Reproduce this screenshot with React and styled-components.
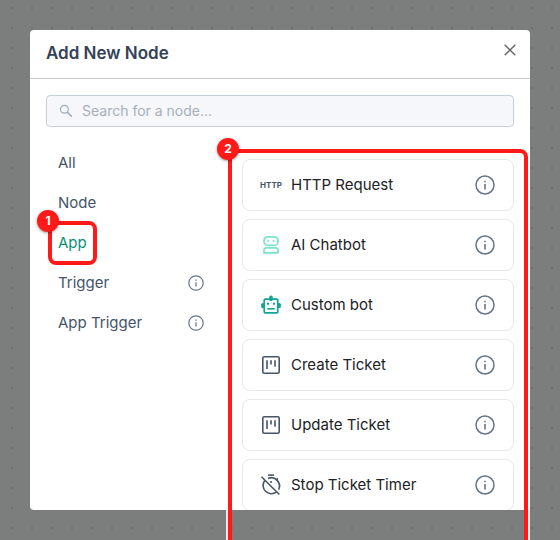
import React, { useState } from "react";
import styled, { createGlobalStyle } from "styled-components";

const GlobalStyle = createGlobalStyle`
  * { box-sizing: border-box; }
  body {
    margin: 0;
    font-family: Inter, "Open Sans", sans-serif;
    color: #44546a;
  }
  button, input { font: inherit; color: inherit; }
`;

const Backdrop = styled.div`
  height: 100vh;
  padding: 30px;
  overflow: hidden;
  background-color: #7b7e7c;
  background-image: radial-gradient(circle, #6e716f 1px, transparent 1px);
  background-size: 20px 20px;
  background-position: 2px 18px;
`;

const Dialog = styled.section`
  display: flex;
  flex-direction: column;
  height: 100%;
  background: #fff;
  border-radius: 4px;
`;

const Header = styled.header`
  display: flex;
  align-items: flex-start;
  justify-content: space-between;
  padding: 10px 10px 12px 16px;
  border-bottom: 1px solid #c7cacd;
`;

const Title = styled.h1`
  margin: 0;
  padding-top: 1px;
  font-size: 17px;
  line-height: 25px;
  font-weight: 600;
  color: #344256;
`;

const IconButton = styled.button`
  display: grid;
  place-items: center;
  width: 20px;
  height: 20px;
  padding: 0;
  border: 0;
  background: none;
  color: ${(p) => p.$color || "#64748b"};
  cursor: pointer;
`;

const Body = styled.div`
  flex: 1;
  min-height: 0;
  display: flex;
  flex-direction: column;
  gap: 16px;
  padding: 16px 16px 0;
`;

const SearchBox = styled.label`
  display: flex;
  align-items: center;
  gap: 9px;
  height: 32px;
  flex: none;
  padding: 0 12px;
  border: 1px solid #c8ced8;
  border-radius: 4px;
  background: #f5f7fb;
  color: #a2acbb;
`;

const SearchInput = styled.input`
  flex: 1;
  min-width: 0;
  padding: 0;
  border: 0;
  outline: 0;
  background: none;
  font-size: 14px;
  line-height: 20px;
  color: #344256;
  &::placeholder { color: #a8b0b9; opacity: 1; }
`;

const Columns = styled.div`
  flex: 1;
  min-height: 0;
  display: grid;
  grid-template-columns: 170px minmax(0, 1fr);
  grid-template-rows: minmax(0, 1fr);
  gap: 26px;
`;

const Categories = styled.nav`
  display: flex;
  flex-direction: column;
`;

const CategoryRow = styled.div`
  display: flex;
  align-items: center;
  justify-content: space-between;
  height: 40px;
  padding: 0 10px 0 12px;
`;

const CategoryButton = styled.button`
  position: relative;
  height: 40px;
  padding: 0;
  border: 0;
  background: none;
  font-size: 15px;
  line-height: 20px;
  color: ${(p) => (p.$active ? "#0a8f76" : "#44546a")};
  cursor: pointer;
`;

const Results = styled.div`
  position: relative;
  min-height: 0;
`;

const NodeList = styled.ul`
  display: flex;
  flex-direction: column;
  gap: 8px;
  height: 100%;
  margin: 0;
  padding: 16px 0 0;
  overflow: hidden;
  list-style: none;
`;

const NodeCard = styled.li`
  display: flex;
  align-items: center;
  flex: none;
  height: 52px;
  padding: 0 18px 0 16px;
  border: 1px solid #e6e8ec;
  border-radius: 8px;
`;

const NodeButton = styled.button`
  display: flex;
  flex: 1;
  align-items: center;
  gap: 8px;
  padding: 0;
  border: 0;
  background: none;
  font-size: 15px;
  line-height: 20px;
  color: #202225;
  text-align: left;
  cursor: pointer;
`;

const IconSlot = styled.span`
  display: grid;
  place-items: center;
  width: 24px;
  height: 24px;
  color: #475569;
`;

const HttpMark = styled.span`
  font-size: 8px;
  line-height: 10px;
  font-weight: 700;
`;

const Highlight = styled.span`
  position: absolute;
  border: 4px solid #ff1a1a;
  border-radius: 8px;
  box-shadow: 0 0 0 2px rgba(255, 255, 255, 0.85);
  pointer-events: none;
`;

const LabelHighlight = styled(Highlight)`
  inset: -2px -10px;
`;

const ListHighlight = styled(Highlight)`
  inset: 6px -14px -60px;
`;

const Step = styled.span`
  position: absolute;
  top: -15px;
  left: -15px;
  width: 22px;
  height: 22px;
  border-radius: 50%;
  background: #ff1a1a;
  box-shadow: 0 1px 3px rgba(0, 0, 0, 0.4);
  color: #fff;
  font-size: 12px;
  line-height: 22px;
  font-weight: 700;
  text-align: center;
`;

const InfoIcon = ({ size = 20 }) => (
  <svg width={size} height={size} viewBox="0 0 20 20" fill="none" stroke="currentColor" strokeWidth="1.5" aria-hidden="true">
    <circle cx="10" cy="10" r="9" />
    <path d="M10 9v5.5" strokeWidth="1.6" />
    <path d="M10 5.7v1.5" strokeWidth="1.6" />
  </svg>
);

const CloseIcon = () => (
  <svg width="14" height="14" viewBox="0 0 14 14" fill="none" stroke="currentColor" strokeWidth="1.3" aria-hidden="true">
    <path d="M1.7 1.7 12.3 12.3M12.3 1.7 1.7 12.3" />
  </svg>
);

const SearchIcon = () => (
  <svg width="14" height="14" viewBox="0 0 14 14" fill="none" stroke="currentColor" strokeWidth="1.2" aria-hidden="true">
    <circle cx="5.4" cy="5.2" r="3.9" />
    <path d="m8.2 8 4.6 4.6" strokeWidth="1.5" />
  </svg>
);

const ChatbotIcon = () => (
  <svg width="24" height="24" viewBox="0 0 24 24" fill="none" stroke="#7ae3c9" strokeWidth="1.7" aria-hidden="true">
    <rect x="5" y="3.8" width="14" height="8.6" rx="4" />
    <path d="M6.5 14.8h11l1.5 1.5v3.5H5v-3.5z" strokeLinejoin="round" />
    <path d="M8.5 7.8h1.8M13.7 7.8h1.8" />
  </svg>
);

const RobotIcon = () => (
  <svg width="24" height="24" viewBox="0 0 24 24" fill="none" stroke="#12a594" strokeWidth="1.7" aria-hidden="true">
    <rect x="5.2" y="6.2" width="13.6" height="13.6" rx="1" />
    <path d="M12 4.4v2" strokeWidth="3.6" strokeLinecap="round" />
    <path d="M3.7 11.6v2M20.3 11.6v2" strokeWidth="3.2" strokeLinecap="round" />
    <path d="M8 10.8h2M14 10.8h2" strokeWidth="2" />
    <path d="M8.3 15.8h7.4" strokeWidth="1.6" />
  </svg>
);

const BoardIcon = () => (
  <svg width="24" height="24" viewBox="0 0 24 24" fill="none" stroke="currentColor" strokeWidth="1.6" aria-hidden="true">
    <rect x="3.8" y="3.8" width="16.4" height="16.4" rx="1.4" />
    <path d="M8 7.3v8.8M12 7.3v4.2M16 7.3v6.4" />
  </svg>
);

const TimerOffIcon = () => (
  <svg width="24" height="24" viewBox="0 0 24 24" fill="none" stroke="currentColor" strokeWidth="1.6" aria-hidden="true">
    <path d="M9 2.1h6" />
    <path d="M2.5 3.7 20.3 21.5" />
    <path d="M5.7 7.5a8.3 8.3 0 0 0 11.6 11.6" />
    <path d="M9 5.4a8.3 8.3 0 0 1 10.6 11.3" />
    <path d="m17.2 7.1 1.7-1.7M12 8v2" />
  </svg>
);

const categories = [
  { name: "All" },
  { name: "Node" },
  { name: "App", step: 1 },
  { name: "Trigger", info: true },
  { name: "App Trigger", info: true },
];

const nodes = [
  { name: "HTTP Request", icon: <HttpMark aria-hidden="true">HTTP</HttpMark> },
  { name: "AI Chatbot", icon: <ChatbotIcon /> },
  { name: "Custom bot", icon: <RobotIcon /> },
  { name: "Create Ticket", icon: <BoardIcon /> },
  { name: "Update Ticket", icon: <BoardIcon /> },
  { name: "Stop Ticket Timer", icon: <TimerOffIcon /> },
];

export default function App() {
  const [active, setActive] = useState("App");
  return (
    <>
      <GlobalStyle />
      <Backdrop>
        <Dialog role="dialog" aria-labelledby="dialog-title">
          <Header>
            <Title id="dialog-title">Add New Node</Title>
            <IconButton type="button" aria-label="Close" $color="#606468">
              <CloseIcon />
            </IconButton>
          </Header>
          <Body>
            <SearchBox>
              <SearchIcon />
              <SearchInput type="text" placeholder="Search for a node..." aria-label="Search for a node" />
            </SearchBox>
            <Columns>
              <Categories aria-label="Node categories">
                {categories.map((c) => (
                  <CategoryRow key={c.name}>
                    <CategoryButton type="button" $active={c.name === active} onClick={() => setActive(c.name)}>
                      {c.name}
                      {c.step && (
                        <LabelHighlight aria-hidden="true">
                          <Step>{c.step}</Step>
                        </LabelHighlight>
                      )}
                    </CategoryButton>
                    {c.info && (
                      <IconButton type="button" aria-label={`About ${c.name}`}>
                        <InfoIcon size={16} />
                      </IconButton>
                    )}
                  </CategoryRow>
                ))}
              </Categories>
              <Results>
                <NodeList>
                  {nodes.map((n) => (
                    <NodeCard key={n.name}>
                      <NodeButton type="button">
                        <IconSlot>{n.icon}</IconSlot>
                        {n.name}
                      </NodeButton>
                      <IconButton type="button" aria-label={`About ${n.name}`}>
                        <InfoIcon />
                      </IconButton>
                    </NodeCard>
                  ))}
                </NodeList>
                <ListHighlight aria-hidden="true">
                  <Step>2</Step>
                </ListHighlight>
              </Results>
            </Columns>
          </Body>
        </Dialog>
      </Backdrop>
    </>
  );
}
